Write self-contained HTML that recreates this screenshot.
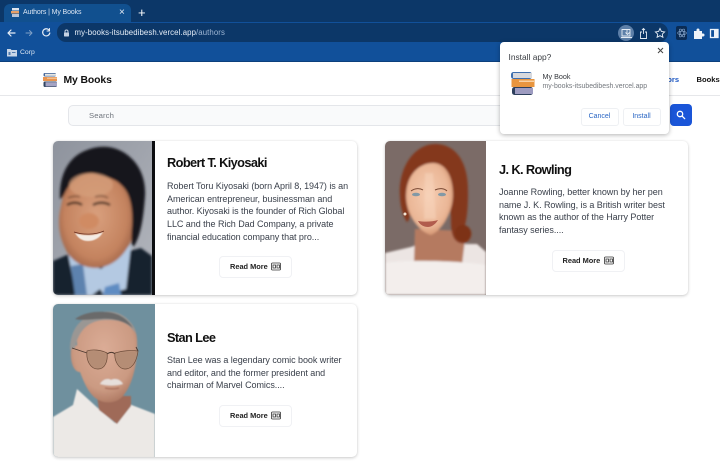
<!DOCTYPE html>
<html><head><meta charset="utf-8"><title>Authors | My Books</title>
<style>
html,body{margin:0;padding:0;width:720px;height:468px;overflow:hidden;background:#fff;font-family:"Liberation Sans",sans-serif;}
.a{position:absolute;white-space:nowrap;}
.card{position:absolute;background:#fff;border-radius:5px;box-shadow:0 1px 3px rgba(0,0,0,.2),0 0 2px rgba(0,0,0,.05);overflow:hidden;}
.h{position:absolute;font-size:12.8px;font-weight:bold;color:#111;letter-spacing:-.62px;white-space:nowrap;line-height:18px;}
.p{position:absolute;font-size:9px;color:#3a404b;line-height:12.7px;white-space:nowrap;letter-spacing:-.05px;}
.btn{position:absolute;width:71px;height:20px;border:1px solid #f0f1f4;border-radius:4px;background:#fff;font-size:7.4px;font-weight:bold;color:#222;}
.btn span{position:absolute;left:10px;top:4px;line-height:12px;white-space:nowrap;}
.btn svg{position:absolute;left:51px;top:5px;}
</style></head><body>
<!-- chrome -->
<div class="a" style="left:0;top:0;width:720px;height:22px;background:#0c3768"></div>
<div class="a" style="left:4px;top:4px;width:127px;height:19px;background:#11508f;border-radius:6px 6px 0 0"></div>
<div class="a" style="left:0;top:22px;width:720px;height:40px;background:#11509a"></div>
<div class="a" style="left:0;top:61px;width:720px;height:1px;background:#0c3f7c"></div>
<svg class="a" style="left:11px;top:8px" width="9" height="9" viewBox="0 0 9 9"><rect x="1" y="0" width="7" height="2.5" fill="#dfe5ee"/><rect x="0" y="3" width="8" height="2.5" fill="#e8a068"/><rect x="1" y="6" width="7" height="3" fill="#b9c3d6"/></svg>
<div class="a" style="left:23px;top:7px;font-size:7px;line-height:12px;color:#d9e4f2;letter-spacing:-.12px">Authors | My Books</div>
<div class="a" style="left:119px;top:6px;font-size:10px;line-height:14px;color:#e8eef6">×</div>
<div class="a" style="left:138px;top:5px;font-size:13px;line-height:16px;color:#fff">+</div>
<div class="a" style="left:57px;top:23px;width:611px;height:18.5px;background:#0c3768;border-radius:9px"></div>
<svg class="a" style="left:0;top:22px" width="60" height="20" viewBox="0 0 60 20" fill="none" stroke-linecap="round" stroke-linejoin="round"><path d="M8 11H15M8 11l3-3M8 11l3 3" stroke="#e6edf6" stroke-width="1.2"/><path d="M32 11h-6M32 11l-2.5-2.5M32 11l-2.5 2.5" stroke="#7e9fc6" stroke-width="1"/><path d="M49 8a3.6 3.6 0 1 0 .8 3" stroke="#e6edf6" stroke-width="1.2"/><path d="M49.5 6.5v2.5h-2.5" stroke="#e6edf6" stroke-width="1"/></svg>
<svg class="a" style="left:63px;top:29px" width="7" height="8" viewBox="0 0 7 8"><rect x="1" y="3.5" width="5" height="4" rx=".6" fill="#c6d3e4"/><path d="M2 3.5V2.5a1.5 1.5 0 0 1 3 0v1" stroke="#c6d3e4" fill="none"/></svg>
<div class="a" style="left:74.5px;top:27px;font-size:7.8px;line-height:12px;color:#e6eef8;letter-spacing:.1px">my-books-itsubedibesh.vercel.app<span style="color:#9db5d3">/authors</span></div>
<!-- toolbar right -->
<div class="a" style="left:618px;top:25px;width:16px;height:16px;border-radius:50%;background:#5d7fa8"></div>
<svg class="a" style="left:620px;top:27px" width="100" height="13" viewBox="0 0 100 13" fill="none" stroke="#e4ebf4" stroke-width=".9"><path d="M2 2.5h8v6.5H2zM1 10.5h11M7 3v4M5.5 5.5L7.5 7.5 9.5 5.5"/><path d="M22 5h-1.5v6.5h6V5H25M23.5 7V1.5M22 3l1.5-1.5L25 3"/><path d="M40 1.5l1.4 3 3.2.4-2.3 2.2.6 3.2-2.9-1.6-2.9 1.6.6-3.2-2.3-2.2 3.2-.4z"/></svg>
<div class="a" style="left:676px;top:26px;width:11px;height:14px;background:#0a2b54;border-radius:2px"></div>
<svg class="a" style="left:676.5px;top:28px" width="10" height="10" viewBox="0 0 10 10" fill="none" stroke="#7f9ec4" stroke-width=".7"><ellipse cx="5" cy="5" rx="4.4" ry="1.8"/><ellipse cx="5" cy="5" rx="4.4" ry="1.8" transform="rotate(60 5 5)"/><ellipse cx="5" cy="5" rx="4.4" ry="1.8" transform="rotate(120 5 5)"/></svg>
<svg class="a" style="left:693px;top:27px" width="27" height="13" viewBox="0 0 27 13"><path d="M1 4h2.5V3a1.5 1.5 0 0 1 3 0v1H9v2.5h1a1.5 1.5 0 0 1 0 3H9V12H1z" fill="#eef3f9"/><rect x="17.5" y="2.5" width="7.5" height="8" fill="none" stroke="#eef3f9" stroke-width="1.3"/><rect x="21" y="2.5" width="4" height="8" fill="#eef3f9"/></svg>
<!-- bookmark -->
<svg class="a" style="left:7px;top:48px" width="10" height="9" viewBox="0 0 10 9"><path d="M0 1h3.5l1 1H10v6.5H0z" fill="#c8d6e8"/><path d="M1.5 4h2v3h-2zM5 4h3.5v1H5z" fill="#517cb0"/></svg>
<div class="a" style="left:20px;top:47px;font-size:6.8px;line-height:12px;color:#dce6f2">Corp</div>
<!-- nav -->
<div class="a" style="left:0;top:62px;width:720px;height:33px;background:#fff;border-bottom:1px solid #e6e7ea"></div>
<svg class="a" style="left:42px;top:72px" width="16" height="16" viewBox="0 0 16 16"><rect x="1.5" y="1" width="12.5" height="3.5" rx="1.2" fill="#46689c"/><rect x="3" y="1.8" width="11" height="2" fill="#e6e6e2"/><rect x="1" y="5" width="14" height="4" fill="#e9944f"/><rect x="5" y="5.7" width="10" height="1" fill="#f8d3a8"/><rect x="1.5" y="9.5" width="13.5" height="5.5" rx="1.2" fill="#2f4461"/><rect x="3.5" y="10.2" width="11.5" height="4.2" fill="#a5a4c4"/></svg>
<div class="a" style="left:63.5px;top:73px;font-size:10.4px;line-height:15px;font-weight:bold;color:#111;letter-spacing:-.1px">My Books</div>
<div class="a" style="left:696.5px;top:74px;font-size:7.6px;line-height:12px;font-weight:bold;color:#111">Books</div>
<div class="a" style="left:650px;top:74px;font-size:7.6px;line-height:12px;font-weight:bold;color:#1a56c4">Authors</div>
<!-- search -->
<div class="a" style="left:67.5px;top:104.5px;width:597px;height:21px;background:#f9fafb;border:1px solid #e4e6ea;border-radius:5px;box-sizing:border-box"></div>
<div class="a" style="left:89px;top:109.5px;font-size:7.7px;line-height:12px;color:#71767e;letter-spacing:.1px">Search</div>
<div class="a" style="left:670px;top:104px;width:22px;height:22px;border-radius:4px;background:#1a55d8"></div>
<svg class="a" style="left:676px;top:110px" width="10" height="10" viewBox="0 0 10 10" fill="none" stroke="#fff" stroke-width="1.3" stroke-linecap="round"><circle cx="4" cy="4" r="2.7"/><path d="M6.2 6.2L8.7 8.7"/></svg>
<!-- Card 1 -->
<div class="card" style="left:53px;top:141px;width:304px;height:154px">
<svg style="position:absolute;left:0;top:0" width="102" height="154" viewBox="0 0 102 154"><defs>
<filter id="b1" x="-20%" y="-20%" width="140%" height="140%"><feGaussianBlur stdDeviation="1.2"/></filter>
<filter id="b2" x="-20%" y="-20%" width="140%" height="140%"><feGaussianBlur stdDeviation=".6"/></filter>
<linearGradient id="g1" x1="0" y1="0" x2="1" y2="1"><stop offset="0" stop-color="#8e939d"/><stop offset="1" stop-color="#b4b7be"/></linearGradient>
<radialGradient id="f1" cx=".48" cy=".5" r=".62"><stop offset="0" stop-color="#d9a07e"/><stop offset=".65" stop-color="#c4835f"/><stop offset="1" stop-color="#8a523b"/></radialGradient></defs>
<rect width="102" height="154" fill="url(#g1)"/>
<g filter="url(#b1)">
<path d="M0 120l16-7 14 14 46-17 12-3 11 8v39H0z" fill="#18202e"/>
<path d="M15 112l8 42h16l8-6 4 6 22-6 5-44-30 24z" fill="#b4c9e2"/>
<path d="M18 125l12-2 4 31H22z" fill="#5d82ae"/>
<path d="M52 146l14-4 2 12H50z" fill="#5f8cc2"/>
<path d="M30 24C52 20 74 30 80 50c5 18 3 38-3 52-7 14-18 24-34 25-14 0-26-8-31-20C6 95 4 80 8 65c3-16 10-34 22-41z" fill="url(#f1)"/>
<path d="M7 58C6 36 14 16 34 9c14-6 32-4 44 8 9 8 15 22 14 38-1 14-3 38-11 50-3 2-3-9-2-20 1-14-1-30-8-38-8-10-16-10-28-14-10-3-22 4-27 12C12 50 10 58 7 58z" fill="#16161b"/>
<ellipse cx="38" cy="44" rx="22" ry="12" fill="#d6a07c" opacity=".7"/>
<ellipse cx="36" cy="80" rx="10" ry="8" fill="#d08b63"/>
<path d="M14 64c5-3 11-3 15 0M40 64c5-3 12-3 17 0" stroke="#352019" stroke-width="2.2" fill="none"/>
<path d="M15 57c4-2 9-2 12-1M42 56c5-2 10-1 13 1" stroke="#6e4630" stroke-width="1.4" fill="none"/>
</g>
<path d="M22 92c8 3 20 3 28-1-3 6-9 9-15 9-6 0-10-3-13-8z" fill="#f4ece5" filter="url(#b2)"/>
<path d="M21 91c9 3 21 3 30-1" stroke="#6a2f20" stroke-width=".8" fill="none"/>
<rect x="99" width="3" height="154" fill="#0c0d10"/>
</svg>
<div class="h" style="left:114px;top:13px">Robert T. Kiyosaki</div>
<div class="p" style="left:114px;top:39px">Robert Toru Kiyosaki (born April 8, 1947) is an<br>American entrepreneur, businessman and<br>author. Kiyosaki is the founder of Rich Global<br>LLC and the Rich Dad Company, a private<br>financial education company that pro...</div>
<div class="btn" style="left:166px;top:114.5px"><span>Read More</span><svg width="11" height="9" viewBox="0 0 11 9" fill="none" stroke="#333" stroke-width=".8"><rect x=".5" y="1" width="9" height="7" rx="1"/><path d="M2 3h2.5v3H2zM6 3h2.5v3H6z"/></svg></div>
</div>
<!-- Card 2 -->
<div class="card" style="left:385px;top:141px;width:303px;height:154px">
<svg style="position:absolute;left:0;top:0" width="101" height="154" viewBox="0 0 101 154"><defs><filter id="b3" x="-20%" y="-20%" width="140%" height="140%"><feGaussianBlur stdDeviation="1"/></filter>
<radialGradient id="f2" cx=".48" cy=".45" r=".62"><stop offset="0" stop-color="#f6cdb2"/><stop offset=".7" stop-color="#eab696"/><stop offset="1" stop-color="#c98560"/></radialGradient></defs>
<rect width="101" height="154" fill="#7b6b67"/>
<g filter="url(#b3)">
<path d="M0 112l26-6 8-3 58 0 9 8v43H0z" fill="#ece5e3"/>
<path d="M30 88l-1 33 48 3 4-34z" fill="#b57a60"/>
<path d="M0 122c20-4 80-2 101 2v30H0z" fill="#f3eeec"/>
<path d="M15 55C13 26 30 3 50 3c22 0 34 20 33 50 0 12-1 24-3 31l6 6c2 8-5 14-11 12-9-3-9-14-9-26L60 30c-14 0-32 12-33 36-1 5-3 15-5 15-4-6-7-16-7-26z" fill="#84381e"/>
<path d="M21 55c0-22 14-33 27-33 13 0 20 14 20 32 0 16-10 35-22 40-12-3-25-20-25-39z" fill="url(#f2)"/>
<path d="M40 32l8 0 3 46-12 0z" fill="#f8d6bd" opacity=".5"/>
<ellipse cx="78" cy="92" rx="8" ry="8" fill="#7d3319"/>
</g>
<path d="M26 50c4-3 9-3 12-1M50 49c4-2 9-2 12 1" stroke="#7a4a35" stroke-width="1" fill="none"/>
<ellipse cx="31" cy="53.5" rx="4" ry="1.8" fill="#8299a6"/><ellipse cx="57" cy="53.5" rx="4" ry="1.8" fill="#8299a6"/>
<path d="M33 80c6 1 14 1 20-1-3 5-7 7-10 7-4 0-8-2-10-6z" fill="#b15c4d"/>
<circle cx="20" cy="73" r="1.5" fill="#f2e6d6"/>
</svg>
<div class="h" style="left:114px;top:19.5px">J. K. Rowling</div>
<div class="p" style="left:114px;top:45px">Joanne Rowling, better known by her pen<br>name J. K. Rowling, is a British writer best<br>known as the author of the Harry Potter<br>fantasy series....</div>
<div class="btn" style="left:166.5px;top:109px"><span>Read More</span><svg width="11" height="9" viewBox="0 0 11 9" fill="none" stroke="#333" stroke-width=".8"><rect x=".5" y="1" width="9" height="7" rx="1"/><path d="M2 3h2.5v3H2zM6 3h2.5v3H6z"/></svg></div>
</div>
<!-- Card 3 -->
<div class="card" style="left:53px;top:304px;width:304px;height:153px">
<svg style="position:absolute;left:0;top:0" width="102" height="153" viewBox="0 0 102 153"><defs><filter id="b4" x="-20%" y="-20%" width="140%" height="140%"><feGaussianBlur stdDeviation=".9"/></filter>
<radialGradient id="f3" cx=".5" cy=".4" r=".65"><stop offset="0" stop-color="#dbac96"/><stop offset=".7" stop-color="#cb9a82"/><stop offset="1" stop-color="#a9735d"/></radialGradient></defs>
<rect width="102" height="153" fill="#6f909e"/>
<g filter="url(#b4)">
<path d="M0 113l20-12 4-16 24 22 14 12 14-19 26 10v44H0z" fill="#ece9e6"/>
<path d="M44 92l34 0 0 10-14 18-18-14z" fill="#9f6a58"/>
<path d="M24 30C26 14 42 9 55 9c16 0 28 10 29 26 1 20-3 44-14 57-8 9-22 8-30 0-6-6-10-16-13-24-7 0-10-12-9-22 1-5 4-6 6-4z" fill="url(#f3)"/>
<path d="M17 46C17 26 26 12 50 8c14-2 28 4 33 22-8-12-16-14-30-14C38 16 26 24 22 44z" fill="#9a9794"/>
<path d="M22 15c8-6 20-8 30-7 12 0 22 6 28 16-10-8-22-10-32-9-10 0-18 2-26 0z" fill="#6b6a6b"/>
<path d="M47 80c3-5 8-6 11-4 4-2 9-1 12 4-7 2-16 2-23 0z" fill="#e6dfdb"/>
<path d="M52 84c4 1 10 1 14 0" stroke="#a66a58" stroke-width="1.4" fill="none"/>
<path d="M34 47c6-2 14-1 20 2 1 8-2 16-9 16-8 0-12-9-11-18zM62 49c7-2 16-3 23-2-1 9-5 18-13 18-6 0-11-8-10-16z" fill="#b58d74"/>
</g>
<path d="M19 44l15 5M54 50c3-2 6-2 8 0M85 47l-2-4" stroke="#4b3930" stroke-width=".9" fill="none"/>
<path d="M34 47c6-2 14-1 20 2 1 8-2 16-9 16-8 0-12-9-11-18zM62 49c7-2 16-3 23-2-1 9-5 18-13 18-6 0-11-8-10-16z" fill="none" stroke="#6a4a38" stroke-width=".7"/>
</svg>
<div class="h" style="left:114px;top:25px">Stan Lee</div>
<div class="p" style="left:114px;top:50px">Stan Lee was a legendary comic book writer<br>and editor, and the former president and<br>chairman of Marvel Comics....</div>
<div class="btn" style="left:166px;top:101px"><span>Read More</span><svg width="11" height="9" viewBox="0 0 11 9" fill="none" stroke="#333" stroke-width=".8"><rect x=".5" y="1" width="9" height="7" rx="1"/><path d="M2 3h2.5v3H2zM6 3h2.5v3H6z"/></svg></div>
</div>
<!-- Popup -->
<div class="a" style="left:500px;top:42px;width:169px;height:92px;background:#fff;border-radius:4px;box-shadow:0 1px 5px rgba(0,0,0,.3)"></div>
<div class="a" style="left:508.5px;top:50.5px;font-size:8.4px;line-height:12px;color:#3a3d42">Install app?</div>
<svg class="a" style="left:657px;top:47px" width="7" height="7" viewBox="0 0 7 7" stroke="#444" stroke-width="1"><path d="M1 1l5 5M6 1l-5 5"/></svg>
<svg class="a" style="left:510px;top:71px" width="25" height="25" viewBox="0 0 25 25"><rect x="1" y="1" width="21" height="7" rx="2.5" fill="#3f6fae"/><rect x="3" y="2" width="19" height="5" fill="#d8d9dd"/><rect x="1.5" y="8" width="23" height="8" fill="#e8953f"/><rect x="9" y="9.5" width="15" height="1.5" fill="#f8d2a6"/><rect x="2" y="16" width="21" height="8" rx="2.5" fill="#2d3f5c"/><rect x="5" y="17" width="18" height="6" fill="#9d9bc0"/></svg>
<div class="a" style="left:542.5px;top:70.5px;font-size:7.2px;line-height:12px;color:#34373c">My Book</div>
<div class="a" style="left:542.5px;top:81px;font-size:6.9px;line-height:12px;color:#73777d">my-books-itsubedibesh.vercel.app</div>
<div class="a" style="left:580.5px;top:108px;width:38px;height:18px;border:1px solid #eef0f3;border-radius:3px;box-sizing:border-box;text-align:center;font-size:7px;line-height:16px;color:#2a66c4">Cancel</div>
<div class="a" style="left:622.5px;top:108px;width:38px;height:18px;border:1px solid #eef0f3;border-radius:3px;box-sizing:border-box;text-align:center;font-size:7px;line-height:16px;color:#2a66c4">Install</div>
</body></html>
